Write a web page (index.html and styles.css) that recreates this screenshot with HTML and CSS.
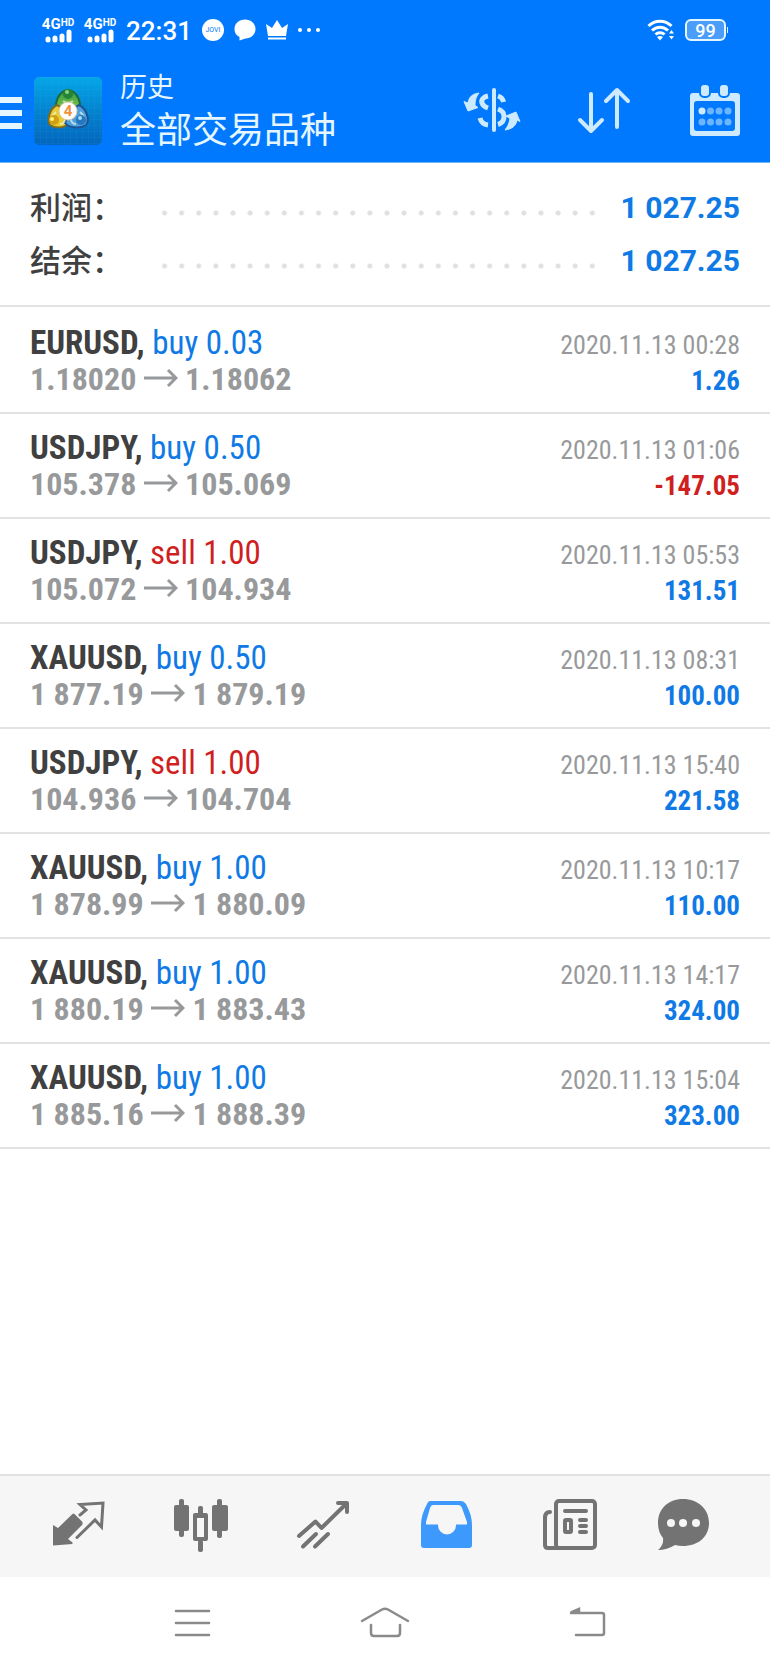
FILE: index.html
```
<!DOCTYPE html>
<html lang="zh-CN">
<head>
    <meta charset="UTF-8">
    <meta name="viewport" content="width=device-width, initial-scale=1.0">
    <title>历史</title>
    <link rel="stylesheet" href="styles.css">
</head>
<body>
    <header class="top">
        <div class="status-bar">
            <div class="sim">
                <span class="sim-label">4G<sup>HD</sup></span>
                <svg width="26" height="12" viewBox="0 0 26 12" stroke="#fff" stroke-width="5" stroke-linecap="round"><path d="M3 9v1M10 8V10M17 6V10M24 2V10"/></svg>
            </div>
            <div class="sim">
                <span class="sim-label">4G<sup>HD</sup></span>
                <svg width="26" height="12" viewBox="0 0 26 12" stroke="#fff" stroke-width="5" stroke-linecap="round"><path d="M3 9v1M10 8V10M17 6V10M24 2V10"/></svg>
            </div>
            <time class="clock">22:31</time>
            <span class="jovi">JOVI</span>
            <svg width="22" height="22" viewBox="0 0 22 22" fill="#fff"><path d="M11 0.500C17 .5 21.500 4.500 21.500 10S17 19.500 11.500 19.500L5.500 21.500V18C2 16.500.5 13.500.5 10 .5 4.500 5 .5 11 .5z"/></svg>
            <svg width="22" height="22" viewBox="0 0 22 22" fill="#fff"><path d="M0 5l6 4 5-8 5 8 6-4-2 12H2zM2 18.500h18v2H2z"/></svg>
            <svg width="22" height="6" viewBox="0 0 22 6" fill="#fff"><circle cx="2" cy="3" r="2"/><circle cx="11" cy="3" r="2"/><circle cx="20" cy="3" r="2"/></svg>
            <svg class="wifi" width="28" height="22" viewBox="0 0 28 22" fill="none" stroke="#fff" stroke-width="3"><path d="M1.500 7C8 .5 18 .5 24.500 7M5 11.500c4.500-4.500 11.500-4.500 16 0M8.500 15.500c2.500-2.500 6.500-2.500 9 0"/><path d="M10 18l3 3.500 3-3.500c-2-1.500-4-1.500-6 0zM22 14.500l2.500-3.500 2.500 3.500zM22 17l2.500 3.500L27 17z" fill="#fff" stroke="none"/></svg>
            <span class="battery">99</span>
        </div>
        <div class="app-bar">
            <button class="menu" aria-label="菜单"><span></span><span></span><span></span></button>
            <svg class="logo" width="68" height="68" viewBox="0 0 68 68">
                <defs>
                    <linearGradient id="tile" x1="0" y1="0" x2="0" y2="1"><stop offset="0" stop-color="#05a6e8"/><stop offset=".5" stop-color="#0483cf"/><stop offset="1" stop-color="#0465bd"/></linearGradient>
                    <pattern id="mesh" width="6" height="6" patternUnits="userSpaceOnUse"><path d="M0 0H6M0 0V6" stroke="#25b0e8" stroke-width="1" opacity=".2"/></pattern>
                    <linearGradient id="green" x1="0" y1="0" x2="0" y2="1"><stop offset="0" stop-color="#2e9a44"/><stop offset="1" stop-color="#8fcf4c"/></linearGradient>
                </defs>
                <rect width="68" height="68" rx="5" fill="url(#tile)"/>
                <rect width="68" height="68" rx="5" fill="url(#mesh)"/>
                <path d="M34 13C43 14 48 25 45 34L34 36 23 34C20 25 25 14 34 13z" fill="url(#green)" stroke="#1f6b35" stroke-width="2"/>
                <path d="M23 28C15 32 13 43 16 48 22 52 31 51 35 46L32 34z" fill="#e9cc35" stroke="#7c6c1c" stroke-width="2"/>
                <path d="M45 28C53 32 56 43 52 48 46 52 35 51 31 46L36 34z" fill="#4d9fe0" stroke="#1c5490" stroke-width="2"/>
                <path d="M29 24q5 4 10 0M22 35q-4 3-5 8M46 35q4 3 5 8M26 47q4 0 5-4M42 47q-4 0-5-4" fill="none" stroke="#e5f6d8" stroke-width="2" opacity=".7"/>
                <circle cx="34" cy="17" r="5" fill="#23843a"/><circle cx="33" cy="15" r="2" fill="#8bd47b"/>
                <circle cx="20" cy="43" r="5" fill="#d0a012"/><circle cx="18" cy="42" r="2" fill="#fff07a"/>
                <circle cx="47" cy="43" r="5" fill="#2678be"/><circle cx="46" cy="41" r="2" fill="#a5dcf8"/>
                <circle cx="34" cy="34" r="9" fill="#fff" stroke="#e0c9a9"/>
                <text x="34" y="39" class="logo-num">4</text>
            </svg>
            <div class="titles">
                <p class="sub">历史</p>
                <h1>全部交易品种</h1>
            </div>
            <div class="actions">
                <button aria-label="交易品种">
                    <svg width="58" height="52" viewBox="0 0 58 52" fill="none" stroke="#cdeaff" stroke-width="5"><path d="M32 5V45" stroke-width="4" stroke-linecap="round"/><path d="M26 11C21 12 19 15 20 18c1 3 3 4 6 5M36 11c3 1 5 3 5.500 6M18 33c1 4 4 6.500 8 7M36 24c4 1.500 6 4 6 7.500 0 4-2.500 7-6 8"/><path d="M17 8C10 9 7 12 6 18L2 16.500 6 26l10-3.500-3-2C13 15 14 12 17 8zM43 45c7-1 11-4 12-10l3 1.500-4-9.500-10 4 4 2.500C47 39 46 41 43 45z" fill="#cdeaff" stroke-width="1" stroke-linejoin="round"/></svg>
                </button>
                <button aria-label="排序">
                    <svg width="54" height="52" viewBox="0 0 54 52" fill="none" stroke="#cdeaff" stroke-width="4" stroke-linecap="round" stroke-linejoin="round"><path d="M13 9V46M2 35l11 11 11-11M39 42V5M28 16L39 5l11 11"/></svg>
                </button>
                <button aria-label="日期">
                    <svg width="50" height="52" viewBox="0 0 50 52"><path d="M3 8H47a3 3 0 0 1 3 3V48a3 3 0 0 1-3 3H3a3 3 0 0 1-3-3V11a3 3 0 0 1 3-3z" fill="#cdeaff"/><rect x="4" y="16" width="41" height="30" rx="3" fill="#0079ff"/><g fill="#cdeaff" stroke="#0079ff" stroke-width="2"><rect x="10" y="-1" width="10" height="13" rx="4"/><rect x="29" y="-1" width="10" height="13" rx="4"/></g><g fill="#6db5ff"><circle cx="12" cy="26" r="3.500" fill="#cdeaff"/><circle cx="20.500" cy="26" r="3.500"/><circle cx="29" cy="26" r="3.500"/><circle cx="38" cy="26" r="3.500"/><circle cx="12" cy="37" r="3.500"/><circle cx="20.500" cy="37" r="3.500"/><circle cx="29" cy="37" r="3.500"/><circle cx="38" cy="37" r="3.500"/></g></svg>
                </button>
            </div>
        </div>
    </header>

    <main>
        <dl class="summary">
            <div class="summary-row"><dt>利润：</dt><dd>1 027.25</dd></div>
            <div class="summary-row"><dt>结余：</dt><dd>1 027.25</dd></div>
        </dl>

        <svg width="0" height="0"><symbol id="arrow" viewBox="0 0 34 20"><path d="M0 10H32M24 2l8 8-8 8" fill="none" stroke="currentColor" stroke-width="3"/></symbol></svg>

        <ul class="deals">
            <li class="deal">
                <p class="symbol"><b>EURUSD,</b> <span class="buy">buy 0.03</span></p>
                <time>2020.11.13 00:28</time>
                <p class="price">1.18020 <svg class="arrow"><use href="#arrow"/></svg> 1.18062</p>
                <p class="profit">1.26</p>
            </li>
            <li class="deal">
                <p class="symbol"><b>USDJPY,</b> <span class="buy">buy 0.50</span></p>
                <time>2020.11.13 01:06</time>
                <p class="price">105.378 <svg class="arrow"><use href="#arrow"/></svg> 105.069</p>
                <p class="profit loss">-147.05</p>
            </li>
            <li class="deal">
                <p class="symbol"><b>USDJPY,</b> <span class="sell">sell 1.00</span></p>
                <time>2020.11.13 05:53</time>
                <p class="price">105.072 <svg class="arrow"><use href="#arrow"/></svg> 104.934</p>
                <p class="profit">131.51</p>
            </li>
            <li class="deal">
                <p class="symbol"><b>XAUUSD,</b> <span class="buy">buy 0.50</span></p>
                <time>2020.11.13 08:31</time>
                <p class="price">1 877.19 <svg class="arrow"><use href="#arrow"/></svg> 1 879.19</p>
                <p class="profit">100.00</p>
            </li>
            <li class="deal">
                <p class="symbol"><b>USDJPY,</b> <span class="sell">sell 1.00</span></p>
                <time>2020.11.13 15:40</time>
                <p class="price">104.936 <svg class="arrow"><use href="#arrow"/></svg> 104.704</p>
                <p class="profit">221.58</p>
            </li>
            <li class="deal">
                <p class="symbol"><b>XAUUSD,</b> <span class="buy">buy 1.00</span></p>
                <time>2020.11.13 10:17</time>
                <p class="price">1 878.99 <svg class="arrow"><use href="#arrow"/></svg> 1 880.09</p>
                <p class="profit">110.00</p>
            </li>
            <li class="deal">
                <p class="symbol"><b>XAUUSD,</b> <span class="buy">buy 1.00</span></p>
                <time>2020.11.13 14:17</time>
                <p class="price">1 880.19 <svg class="arrow"><use href="#arrow"/></svg> 1 883.43</p>
                <p class="profit">324.00</p>
            </li>
            <li class="deal">
                <p class="symbol"><b>XAUUSD,</b> <span class="buy">buy 1.00</span></p>
                <time>2020.11.13 15:04</time>
                <p class="price">1 885.16 <svg class="arrow"><use href="#arrow"/></svg> 1 888.39</p>
                <p class="profit">323.00</p>
            </li>
        </ul>
    </main>

    <nav class="tabs">
        <a href="#quotes" aria-label="行情">
            <svg width="56" height="50" viewBox="0 0 56 50"><path d="M3 23l5 3L22.500 12q1-1 2 0l8 8v2.500L18 37l4.500 3.500v1.500L3 43.500z" fill="#737373"/><path d="M30 13l6-5-6-5.500 23-1.500-1.500 24-6.500-7L27 35.500" fill="none" stroke="#737373" stroke-width="3" stroke-linecap="round"/></svg>
        </a>
        <a href="#chart" aria-label="图表">
            <svg width="56" height="50" viewBox="0 0 56 50" fill="#737373"><rect x="1" y="3" width="15" height="26" rx="2"/><rect x="6" y="-3" width="5" height="38" rx="2"/><rect x="39" y="3" width="16" height="26" rx="2"/><rect x="44" y="-3" width="5" height="39" rx="2"/><path d="M22 11h11a2 2 0 0 1 2 2V37a2 2 0 0 1-2 2H22a2 2 0 0 1-2-2V13a2 2 0 0 1 2-2zM24 16V35h7V16z" fill-rule="evenodd"/><rect x="25" y="4" width="5" height="9" rx="2"/><rect x="25" y="38" width="5" height="12" rx="2"/></svg>
        </a>
        <a href="#trade" aria-label="交易">
            <svg width="56" height="50" viewBox="0 0 56 50" fill="none" stroke="#737373" stroke-width="4" stroke-linecap="round" stroke-linejoin="round"><path d="M3 34L19.500 19.500l6 6.500L50 2M42 1H51V10"/><path d="M7 44.500L20 32M19 44.500L32 32"/></svg>
        </a>
        <a href="#history" aria-label="历史" aria-current="page">
            <svg width="56" height="50" viewBox="0 0 56 50"><path d="M11-1H42Q45-1 47 2 53 13 53 23V43q0 3-3 3H5q-3 0-3-3V23Q2 13 8 2 9-1 11-1z" fill="#3e99fc"/><path d="M14 3H39Q42 3 43 6L48 20v2.500H37v1a9 9 0 0 1-18 0v-1H7V20L11 6Q12 3 14 3z" fill="#f6f6f6"/></svg>
        </a>
        <a href="#news" aria-label="新闻">
            <svg width="56" height="50" viewBox="0 0 56 50" fill="none" stroke="#737373" stroke-width="4" stroke-linecap="round"><rect x="14" y="-1" width="39" height="47" rx="3"/><path d="M8 10q-5 0-5 6V43q0 3 3 3H16"/><path d="M23 9H44M38 18h6M38 24h6M38 30h6"/><rect x="23" y="18" width="6" height="12" rx="1"/></svg>
        </a>
        <a href="#messages" aria-label="消息">
            <svg width="56" height="50" viewBox="0 0 56 50"><path d="M28-3C43-3 54 7 54 21S43 44 28 44q-4 0-8-1-8 5-17 5 6-5 5-12Q3 30 3 21C3 7 13-3 28-3z" fill="#737373"/><g fill="#f6f6f6"><circle cx="16" cy="21" r="4"/><circle cx="28" cy="21" r="4"/><circle cx="41" cy="21" r="4"/></g></svg>
        </a>
    </nav>

    <div class="system-nav">
        <button aria-label="最近任务"><svg width="50" height="30" viewBox="0 0 50 30"><path d="M9 3H42M9 15H42M9 27H42"/></svg></button>
        <button aria-label="主屏幕"><svg width="50" height="30" viewBox="0 0 50 30"><path d="M2 13L22 1.500Q25 0 28 1.500L48 13M11 17v8q0 3 3 3H37q3 0 3-3V17"/></svg></button>
        <button aria-label="返回"><svg width="50" height="30" viewBox="0 0 50 30"><path d="M18 5H49q2 0 2 2V25q0 2-2 2H23M18 4.500L26 1V4z"/></svg></button>
    </div>
</body>
</html>
```
FILE: styles.css
```
* {
    box-sizing: border-box;
}

body {
    margin: 0;
    min-height: 100vh;
    display: flex;
    flex-direction: column;
    background-color: #fff;
    color: #404040;
    font-family: Roboto, "Noto Sans CJK SC", sans-serif;
}

p, h1, dl, dd, ul {
    margin: 0;
    padding: 0;
}

button {
    padding: 0;
    border: none;
    background: none;
    cursor: pointer;
}

svg {
    display: block;
    overflow: visible;
}

/* Blue header */
.top {
    background-color: #0079ff;
    border-bottom: 1px solid #6bb4f5;
    color: #e6f6ff;
}

.status-bar {
    height: 60px;
    padding: 0 44px 0 42px;
    display: flex;
    align-items: center;
    gap: 10px;
    color: #fff;
}

.sim {
    width: 32px;
    display: flex;
    flex-direction: column;
    align-items: center;
}

.sim-label {
    font-size: 15px;
    line-height: 11px;
    font-weight: 700;
    white-space: nowrap;
}

.sim-label sup {
    font-size: 10px;
    line-height: 0;
    vertical-align: 3px;
}

.clock {
    padding-top: 2px;
    font-size: 26px;
    line-height: 30px;
    font-weight: 500;
}

.jovi {
    width: 22px;
    height: 22px;
    border-radius: 50%;
    background-color: #fff;
    color: #0079ff;
    font-size: 7px;
    line-height: 22px;
    text-align: center;
}

.wifi {
    margin-left: auto;
}

.battery {
    position: relative;
    width: 41px;
    height: 22px;
    border: 2px solid #e6f6ff;
    border-radius: 6px;
    background-color: #4b9dfa;
    font-size: 18px;
    line-height: 19px;
    font-weight: 500;
    text-align: center;
}

/* Battery tip */
.battery::after {
    content: "";
    position: absolute;
    top: 6px;
    right: -4px;
    width: 1px;
    height: 6px;
    background-color: #e6f6ff;
}

.app-bar {
    height: 102px;
    padding-right: 30px;
    display: flex;
    align-items: center;
}

.menu {
    width: 22px;
    padding-top: 4px;
    display: flex;
    flex-direction: column;
    gap: 7px;
}

.menu span {
    height: 6px;
    background-color: #e6f6ff;
}

.logo {
    margin-left: 12px;
}

.logo-num {
    font-size: 15px;
    font-weight: 700;
    fill: #f0923c;
    text-anchor: middle;
}

.titles {
    margin-left: 18px;
}

.sub {
    font-size: 27px;
    line-height: 40px;
}

h1 {
    font-size: 36px;
    line-height: 46px;
    font-weight: 400;
}

.actions {
    margin-left: auto;
    display: flex;
    gap: 58px;
}

/* Totals */
.summary {
    padding: 18px 30px;
    border-bottom: 2px solid #e2e2e2;
}

.summary-row {
    height: 53px;
    display: flex;
    align-items: center;
}

.summary-row dt {
    width: 126px;
    padding-bottom: 4px;
    font-family: "Noto Sans CJK SC Medium", "Noto Sans CJK SC", sans-serif;
    font-size: 31px;
    line-height: 44px;
    font-weight: 500;
}

.summary-row dd {
    flex: 1;
    display: flex;
    align-items: center;
    gap: 20px;
    color: #0f7ae5;
    font-size: 30px;
    font-weight: 700;
}

.summary-row dd::before {
    content: "";
    flex: 1;
    height: 6px;
    margin-top: 10px;
    background: radial-gradient(circle, #e0e0e0 2px, transparent 3px) 0 0 / 17px 6px round;
}

/* Deals */
.deals {
    padding-top: 2px;
    list-style: none;
}

.deal {
    padding: 16px 30px 15px;
    display: grid;
    grid-template-columns: 1fr auto;
    grid-auto-rows: 36px;
    align-items: baseline;
    border-bottom: 2px solid #e2e2e2;
    font-family: "Roboto Condensed", Roboto, sans-serif;
    line-height: 36px;
    white-space: nowrap;
}

.symbol {
    font-size: 33px;
}

.buy {
    color: #0f7ae5;
}

.sell {
    color: #d01f1f;
}

.price {
    color: #97999b;
    font-size: 32px;
    font-weight: 700;
}

.arrow {
    display: inline-block;
    width: 34px;
    height: 20px;
    vertical-align: 2px;
}

.deal time {
    color: #97999b;
    font-size: 26px;
}

.profit {
    color: #0f7ae5;
    font-size: 27px;
    font-weight: 700;
    text-align: right;
}

.loss {
    color: #d01f1f;
}

/* Bottom bars */
.tabs {
    height: 103px;
    margin-top: auto;
    padding: 0 35px 0 17px;
    display: flex;
    align-items: center;
    background-color: #f6f6f6;
    border-top: 2px solid #e2e2e2;
}

.tabs a {
    flex: 1;
    display: flex;
    justify-content: center;
}

.tabs a:last-child {
    flex: 0 0 104px;
}

.system-nav {
    height: 91px;
    padding: 0 95px;
    display: flex;
    align-items: center;
}

.system-nav button {
    flex: 1;
    display: flex;
    justify-content: center;
}

.system-nav path {
    fill: none;
    stroke: #8a8a8a;
    stroke-width: 2.5;
    stroke-linecap: round;
}
```
